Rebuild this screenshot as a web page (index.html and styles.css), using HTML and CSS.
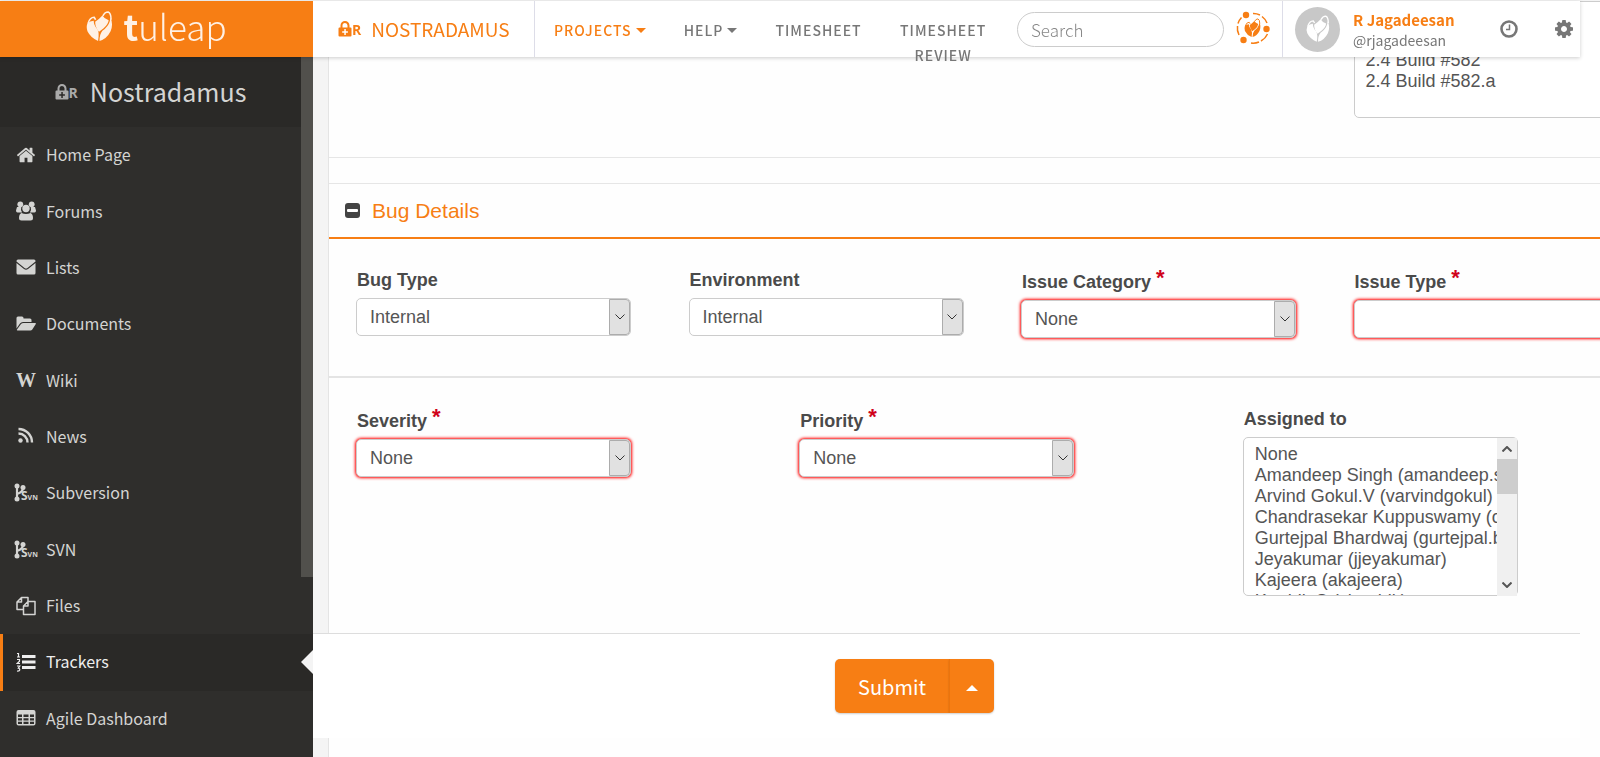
FILE: index.html
```html
<!DOCTYPE html>
<html lang="en">
<head>
<meta charset="utf-8">
<title>Nostradamus - Trackers</title>
<link rel="stylesheet" href="styles.css">
</head>
<body>
<svg class="defs" aria-hidden="true">
  <symbol id="lock" viewBox="0 0 14 17">
    <path d="M1.500 7.500h1V5.500a4.500 4.500 0 0 1 9 0v2h1q1 0 1 1v7q0 1-1 1h-11q-1 0-1-1v-7q0-1 1-1zM4.500 7.500h5V5.500a2.500 2.500 0 0 0-5 0zM6.300 9v2.200H4.200v1.500h2.100v2.200h1.500v-2.200h2.100v-1.500H7.800V9z" fill-rule="evenodd"/>
  </symbol>
  <symbol id="leaf" viewBox="0 0 28 32">
    <path d="M1.500 13Q4 10 8 10Q8 15 12 19Q14 23 12.500 31Q5 28 1.500 21Q0 16 1.500 13z"/>
    <path d="M25.500 7Q28.500 14 25.500 21Q21.500 29 14 31Q14 24 17 20.500Q23 16 24.500 11z"/>
    <path d="M9.500 11Q14 8 17 4.500Q19 8 23.500 9.500Q23 14 18 18L13.500 21.500Q9.500 17 9.500 11z"/>
    <path d="M2 13Q4 6.500 8.500 6.500L10 9M17.500 5Q19.500 1 23 1Q26 2 26 9" fill="none" stroke="currentColor" stroke-width="1.600"/>
  </symbol>
  <symbol id="branch" viewBox="0 0 12 19">
    <path d="M3 3v13M9 5q0 4-6 6" fill="none" stroke="currentColor" stroke-width="2.200"/>
    <circle cx="3" cy="3" r="2.500"/><circle cx="9" cy="4.500" r="2.500"/><circle cx="3" cy="16" r="2.500"/>
  </symbol>
  <symbol id="chevron" viewBox="0 0 10 6"><path d="M.500.500L5 5L9.500.500" fill="none" stroke="currentColor"/></symbol>
</svg>

<header class="topbar">
  <a class="logo" href="#">
    <svg class="logo-leaf"><use href="#leaf"/></svg>
    <span class="logo-text"><b>t</b>uleap</span>
  </a>
  <a class="project-link" href="#"><span class="lock"><svg><use href="#lock"/></svg>R</span>NOSTRADAMUS</a>
  <nav class="topnav">
    <a class="active" href="#">PROJECTS <i class="caret"></i></a>
    <a href="#">HELP <i class="caret"></i></a>
    <a href="#">TIMESHEET</a>
    <a class="narrow" href="#">TIMESHEET REVIEW</a>
  </nav>
  <input class="search" type="search" placeholder="Search" aria-label="Search">
  <a class="events" href="#" aria-label="Community">
    <svg viewBox="0 0 34 34">
      <path d="M17 2.500A15 15 0 0 1 24 4M26 5.500A15 15 0 0 1 31 12M31.500 23A15 15 0 0 1 25 30M23 31A15 15 0 0 1 15 32M3 24A15 15 0 0 1 1.500 15M2 12.500A15 15 0 0 1 5.500 6.500" fill="none" stroke="currentColor" stroke-width="1.500"/>
      <circle cx="10" cy="4" r="3.200"/><circle cx="30.500" cy="18" r="3.200"/><circle cx="7.500" cy="29" r="3.200"/>
      <use href="#leaf" x="8" y="7" width="17" height="20"/>
    </svg>
  </a>
  <div class="user">
    <span class="avatar"><svg><use href="#leaf"/></svg></span>
    <span class="who"><a href="#">R Jagadeesan</a><span>@rjagadeesan</span></span>
  </div>
  <button class="tool" aria-label="History"><svg viewBox="0 0 18 18"><circle cx="9" cy="9" r="7.500" fill="none" stroke="currentColor" stroke-width="2.600"/><path d="M9.500 4.500v5H6" fill="none" stroke="currentColor" stroke-width="1.500"/></svg></button>
  <button class="tool" aria-label="Settings"><svg viewBox="128 128 1536 1536"><path d="M1152 896q0-106-75-181t-181-75-181 75-75 181 75 181 181 75 181-75 75-181zm512-109v222q0 12-8 23t-20 13l-185 28q-19 54-39 91 35 50 107 138 10 12 10 25t-9 23q-27 37-99 108t-94 71q-12 0-26-9l-138-108q-44 23-91 38-16 136-29 186-7 28-36 28h-222q-14 0-24.500-8.500t-11.500-21.500l-28-184q-49-16-90-37l-141 107q-10 9-25 9-14 0-25-11-126-114-165-168-7-10-7-23 0-12 8-23 15-21 51-66.500t54-70.500q-27-50-41-99l-183-27q-13-2-21-12.500t-8-23.500v-222q0-12 8-23t19-13l186-28q14-46 39-92-40-57-107-138-10-12-10-24 0-10 9-23 26-36 98.500-107.500t94.500-71.500q13 0 26 10l138 107q44-23 91-38 16-136 29-186 7-28 36-28h222q14 0 24.500 8.500t11.500 21.500l28 184q49 16 90 37l142-107q9-9 24-9 13 0 25 10 129 119 165 170 7 8 7 22 0 12-8 23-15 21-51 66.500t-54 70.500q26 50 41 98l183 28q13 2 21 12.500t8 23.500z"/></svg></button>
</header>

<div class="page">
  <aside class="sidebar">
    <div class="side-title"><span class="lock"><svg><use href="#lock"/></svg>R</span>Nostradamus</div>
    <div class="side-scroll"></div>
    <nav class="side-nav">
      <a href="#"><svg viewBox="0 0 1664 1792"><path d="M1408 992v480q0 26-19 45t-45 19h-384v-384h-256v384h-384q-26 0-45-19t-19-45v-480q0-1 .5-3t.5-3l575-474 575 474q1 2 1 6zm223-69l-62 74q-8 9-21 11h-3q-13 0-21-7l-692-577-692 577q-12 8-24 7-13-2-21-11l-62-74q-8-10-7-23.500t11-21.500l719-599q32-26 76-26t76 26l244 204v-195q0-14 9-23t23-9h192q14 0 23 9t9 23v408l219 182q10 8 11 21.500t-7 23.500z"/></svg>Home Page</a>
      <a href="#"><svg viewBox="0 0 20 20"><circle cx="4.300" cy="3.300" r="2.900"/><circle cx="15.700" cy="3.300" r="2.900"/><path d="M1 6h4.300q-1 3 .8 5.500H1.500Q0 11.500 0 9.500zM19 6h-4.300q1 3-.8 5.500h4.600q1.500 0 1.500-2z"/><circle cx="10" cy="7.500" r="3.700"/><path d="M5.500 12q4.500 2 9 0Q17 13 17 17q0 2.500-2.500 2.500h-9Q3 19.500 3 17q0-4 2.500-5z"/></svg>Forums</a>
      <a href="#"><svg viewBox="0 0 20 20"><path d="M2 2.500h16q1.500 0 1.500 1.500v.5L11.500 11q-1.500 1-3 0L.5 4.500V4Q.5 2.500 2 2.500zM.5 6l7.500 6q2 1.300 4 0l7.500-6V16q0 1.500-1.500 1.500H2Q.5 17.500.5 16z"/></svg>Lists</a>
      <a href="#"><svg viewBox="0 0 20 20"><path d="M.5 14.500V4q0-1.500 1.500-1.500h4q1.500 0 1.500 1.500v.5h6.500q1.500 0 1.500 1.500v2H7Q5 8 4 9.500zM7.500 9h11.800q1 0 .5 1l-3.500 5.500q-.7 1-2 1H1.500q-1 0-.5-1L5 10q1-1 2.500-1z"/></svg>Documents</a>
      <a href="#"><span class="icon-w">W</span>Wiki</a>
      <a href="#"><svg viewBox="0 0 20 20"><circle cx="4.500" cy="14.500" r="2.200"/><path d="M2.500 7.500a9 9 0 0 1 9 9M2.500 3a13.500 13.500 0 0 1 13.500 13.500" fill="none" stroke="currentColor" stroke-width="2.400"/></svg>News</a>
      <a href="#"><span class="svn"><svg><use href="#branch"/></svg><b>S</b><small>VN</small></span>Subversion</a>
      <a href="#"><span class="svn"><svg><use href="#branch"/></svg><b>S</b><small>VN</small></span>SVN</a>
      <a href="#"><svg viewBox="0 0 20 20"><path d="M7.500 13.500H1V6l4.500-4.500H12v4M5.500 1.500V6H1M12 5.500h7v13H7.500V10zM12 5.500V10H7.500" fill="none" stroke="currentColor" stroke-width="1.500" stroke-linejoin="round"/></svg>Files</a>
      <a class="current" href="#"><svg viewBox="0 0 20 20"><path d="M6 3h13.500v3H6zM6 8.500h13.500v3H6zM6 14h13.500v3H6z"/><path d="M1 1.500h1.500V5M1 5h3M1 7.500h2.500v1.800L1.200 11.500H4M1 14h2.800l-1.500 2.200Q3.800 16.500 3.800 17.800Q3.500 19.300 1 19" fill="none" stroke="currentColor" stroke-width="1.200"/></svg>Trackers</a>
      <a href="#"><svg viewBox="0 0 20 20"><path fill-rule="evenodd" d="M2.500 2h15Q19.500 2 19.500 4v11.500q0 2-2 2h-15q-2 0-2-2V4q0-2 2-2zM2 6.500V9h4V6.500zM7.500 6.500V9h5V6.500zM14 6.500V9h4V6.500zM2 10.300v2.200h4v-2.200zM7.500 10.300v2.200h5v-2.200zM14 10.300v2.200h4v-2.200zM2 13.800V16h4v-2.200zM7.500 13.800V16h5v-2.200zM14 13.800V16h4v-2.200z"/></svg>Agile Dashboard</a>
    </nav>
  </aside>

  <main class="content">
    <form class="artifact">
      <section class="panel builds">
        <div class="row four">
          <select class="list build-list" multiple aria-label="Build">
            <option>2.4 Build #580</option><option>2.4 Build #581</option><option>2.4 Build #582</option><option>2.4 Build #582.a</option>
          </select>
        </div>
      </section>
      <section class="panel">
        <h2><svg viewBox="0 0 15 15"><rect width="15" height="15" rx="3"/><rect class="minus" x="2" y="6" width="11" height="3" rx="1"/></svg>Bug Details</h2>
        <div class="row four first">
          <div class="field"><label for="type">Bug Type</label><div class="pick"><select id="type"><option>Internal</option></select><i><svg><use href="#chevron"/></svg></i></div></div>
          <div class="field"><label for="env">Environment</label><div class="pick"><select id="env"><option>Internal</option></select><i><svg><use href="#chevron"/></svg></i></div></div>
          <div class="field required"><label for="cat">Issue Category <b>*</b></label><div class="pick"><select id="cat"><option>None</option></select><i><svg><use href="#chevron"/></svg></i></div></div>
          <div class="field required"><label for="issue">Issue Type <b>*</b></label><div class="pick"><select id="issue"><option></option></select><i><svg><use href="#chevron"/></svg></i></div></div>
        </div>
        <div class="row three">
          <div class="field required"><label for="sev">Severity <b>*</b></label><div class="pick"><select id="sev"><option>None</option></select><i><svg><use href="#chevron"/></svg></i></div></div>
          <div class="field required"><label for="pri">Priority <b>*</b></label><div class="pick"><select id="pri"><option>None</option></select><i><svg><use href="#chevron"/></svg></i></div></div>
          <div class="field"><label for="assigned">Assigned to</label>
            <div class="list-wrap">
              <select id="assigned" class="list" multiple>
                <option>None</option><option>Amandeep Singh (amandeep.singh)</option><option>Arvind Gokul.V (varvindgokul)</option><option>Chandrasekar Kuppuswamy (cskuppuswamy)</option><option>Gurtejpal Bhardwaj (gurtejpal.bhardwaj)</option><option>Jeyakumar (jjeyakumar)</option><option>Kajeera (akajeera)</option><option>Karthik S (skarthik)</option>
              </select>
              <span class="bar"><svg class="up"><use href="#chevron"/></svg><i></i><svg><use href="#chevron"/></svg></span>
            </div>
          </div>
        </div>
      </section>
    </form>
  </main>
</div>

<div class="submit-bar">
  <button class="submit">Submit</button><button class="submit-more" aria-label="More submit options"><i class="caret up"></i></button>
</div>
</body>
</html>
```
FILE: styles.css
```css
* { box-sizing: border-box; }
body {
  margin: 0;
  height: 100vh;
  overflow: hidden;
  background: #f4f4f4;
  color: #555;
  font: 18px/21px "Liberation Sans", Arial, sans-serif;
}
a { color: inherit; text-decoration: none; }
svg { fill: currentColor; flex: none; }
button { border: 0; padding: 0; background: none; color: inherit; font: inherit; }
.defs { position: absolute; width: 0; height: 0; }
.topbar, .sidebar, .submit-bar { font-family: "Noto Sans CJK JP", "Noto Sans", sans-serif; }
.lock { display: flex; align-items: flex-end; font: bold 14px/14px "Open Sans", sans-serif; }
.lock svg { width: 14px; height: 17px; }

.topbar {
  position: fixed;
  z-index: 3;
  top: 1px;
  left: 0;
  right: 20px;
  height: 56px;
  display: flex;
  align-items: stretch;
  background: #fff;
  box-shadow: 0 1px 4px rgba(0, 0, 0, .2);
  color: #777;
}
.logo {
  width: 313px;
  padding-bottom: 6px;
  display: flex;
  align-items: center;
  justify-content: center;
  gap: 10px;
  background: #f77e14;
  color: #fff1e5;
}
.logo-leaf { width: 27px; height: 31px; }
.logo-text { font-size: 35px; line-height: 48px; font-weight: 300; }
.logo-text b { font-weight: 700; }
.project-link {
  width: 222px;
  padding: 0 0 2px 25px;
  display: flex;
  align-items: center;
  gap: 10px;
  border-right: 1px solid #dddde8;
  color: #f77e14;
  font-size: 19px;
}
.topnav { display: flex; padding-top: 17px; font-size: 14px; line-height: 25px; font-weight: 500; letter-spacing: 1px; text-align: center; }
.topnav a { padding: 0 19px; white-space: nowrap; }
.topnav .narrow { width: 125px; white-space: normal; }
.topnav .active { color: #f77e14; }
.caret { display: inline-block; border: 5px solid transparent; border-top-color: currentColor; border-bottom: 0; vertical-align: 3px; }
.caret.up { border: 6px solid transparent; border-bottom-color: currentColor; border-top: 0; }
.search {
  width: 207px;
  height: 35px;
  margin: 11px 12px 0 auto;
  padding: 0 13px;
  border: 1px solid #ccc;
  border-radius: 18px;
  background: #fff;
  font: 300 17px "Noto Sans CJK JP", sans-serif;
}
.search::placeholder { color: #888; }
.events { padding: 10px 12px 0 0; color: #f77e14; }
.events svg { width: 34px; height: 34px; }
.user { display: flex; align-items: center; gap: 13px; width: 206px; padding-left: 12px; border-left: 1px solid #dddde8; }
.avatar { display: flex; align-items: center; justify-content: center; width: 45px; height: 45px; border-radius: 50%; background: #c8c8c8; color: #fff; }
.avatar svg { width: 24px; height: 28px; }
.who { display: flex; flex-direction: column; padding-top: 2px; font-size: 14px; line-height: 21px; }
.who a { color: #f77e14; font-weight: 700; font-size: 15px; }
.tool { width: 18px; margin-left: 12px; display: flex; align-items: center; }
.tool + .tool { margin: 0 7px 0 37px; }
.tool svg { width: 18px; height: 18px; }

.page { display: flex; height: 100vh; padding-top: 1px; }
.sidebar {
  position: relative;
  flex: 0 0 313px;
  display: flex;
  flex-direction: column;
  padding: 56px 0 10px;
  background: #2f2e2c;
  color: #d4d4d2;
}
.side-title {
  height: 70px;
  padding: 0 12px 2px 0;
  display: flex;
  align-items: center;
  justify-content: center;
  gap: 12px;
  background: #2a2927;
  font-size: 25px;
}
.side-title .lock { color: #aaa; }
.side-scroll { position: absolute; top: 56px; right: 0; width: 12px; height: 520px; background: #51504c; }
.side-nav { flex: 1; display: flex; flex-direction: column; font-size: 16px; }
.side-nav a { flex: 1; display: flex; align-items: center; gap: 10px; padding: 0 0 1px 16px; }
.side-nav svg { width: 20px; height: 20px; }
.icon-w { width: 20px; display: flex; justify-content: center; font: bold 20px/20px "Liberation Serif", serif; }
.svn { width: 24px; margin: 0 -2px; display: flex; align-items: flex-end; font-family: "Open Sans", sans-serif; }
.side-nav .svn svg { width: 12px; height: 19px; margin-right: -5px; }
.svn b { font-size: 12px; line-height: 13px; }
.svn small { font-size: 7px; line-height: 9px; font-weight: 700; }
.side-nav .current { position: relative; background: #2a2927; box-shadow: inset 3px 0 #f77e14; color: #eee; }
.side-nav .current::after { content: ""; position: absolute; right: 0; top: 50%; margin-top: -12px; border: 12px solid transparent; border-right-color: #f4f4f4; border-left: 0; }

.content { flex: 1; min-width: 0; overflow: hidden; padding-left: 15px; }
.artifact { min-width: 1386px; min-height: 100%; background: #fefefe; border-left: 1px solid #e4e4e4; }
.panel { border-top: 1px solid #e6e6e6; }
.builds { height: 157px; margin-bottom: 25px; border-top: 0; border-bottom: 1px solid #e6e6e6; }
h2 { margin: 0; height: 55px; padding-left: 16px; display: flex; align-items: center; gap: 12px; border-bottom: 2px solid #f77e14; color: #f77e14; font-size: 21px; font-weight: 400; }
h2 svg { width: 15px; height: 15px; color: #444; }
h2 .minus { fill: #fff; }
.row { display: grid; padding: 0 28px 0 27px; }
.four { grid-template-columns: repeat(4, 1fr); }
.three { grid-template-columns: repeat(3, 1fr); padding-top: 30px; }
.first { height: 139px; padding-top: 30px; border-bottom: 2px solid #e4e4e4; }
.field label { display: block; height: 29px; padding-left: 1px; color: #4a4a4a; font-weight: 700; line-height: 22px; }
.required label { height: 31px; line-height: 26px; }
.required b { color: #d0021b; font-size: 22px; line-height: 0; vertical-align: 3px; }
.pick { position: relative; width: 275px; }
.pick select { appearance: none; width: 100%; height: 38px; padding: 0 30px 0 13px; border: 1px solid #ccc; border-radius: 5px; background: #fff; color: #555; font: inherit; }
.pick i { position: absolute; top: 1px; right: 1px; bottom: 1px; width: 21px; display: flex; align-items: center; justify-content: center; border: 1px solid #acacac; border-radius: 0 4px 4px 0; background: #e1e1e1; color: #333; pointer-events: none; }
.pick svg, .bar svg { width: 10px; height: 6px; }
.required select { box-shadow: 0 0 3px 1px #f00; }
.list { width: 275px; height: 159px; padding: 6px 11px; border: 1px solid #ccc; border-radius: 5px; background: #fff; color: #555; font: inherit; overflow: hidden; outline: 0; }
.list option { padding: 0; min-height: 21px; line-height: 21px; }
.build-list { grid-column: 4; height: 117px; }
.list-wrap { position: relative; width: 275px; }
.bar { position: absolute; top: 1px; right: 1px; bottom: 1px; width: 20px; display: flex; flex-direction: column; align-items: center; padding: 8px 0; background: #f0f0f0; }
.bar svg { stroke-width: 2px; }
.bar .up { transform: rotate(180deg); }
.bar i { width: 20px; height: 35px; margin: 7px 0 auto; background: #cdcdcd; }

.submit-bar { position: fixed; z-index: 2; left: 313px; right: 20px; bottom: 19px; height: 105px; padding: 25px 64px 0 0; display: flex; justify-content: center; border-top: 1px solid #ddd; background: #fff; color: #fff; }
.submit, .submit-more { height: 54px; background: #f77e14; box-shadow: 0 1px 2px rgba(0, 0, 0, .2); }
.submit { width: 114px; border-radius: 5px 0 0 5px; font-size: 20px; }
.submit-more { width: 45px; border-left: 1px solid #ec740c; border-radius: 0 5px 5px 0; }
```
